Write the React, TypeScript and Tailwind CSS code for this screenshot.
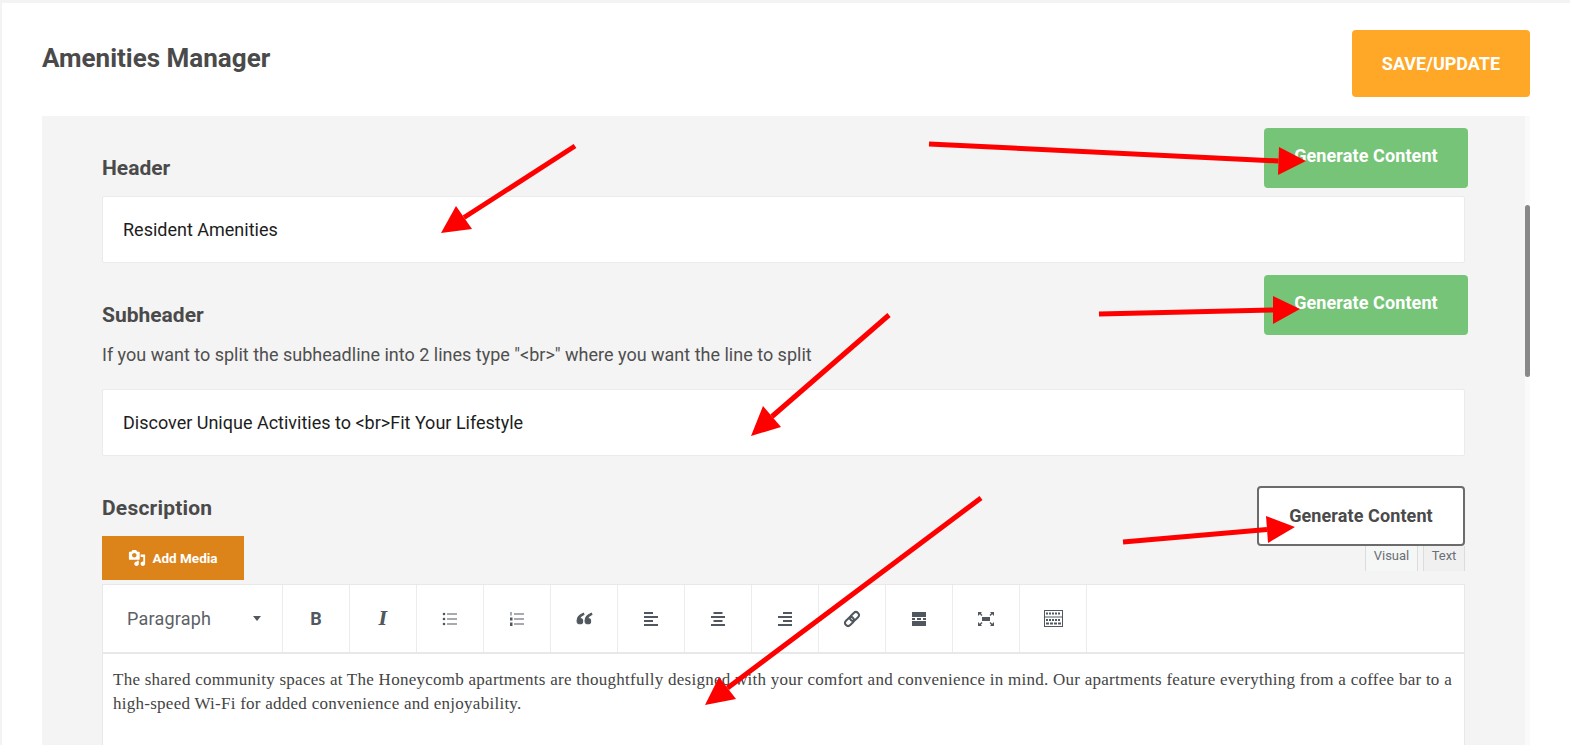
import React from 'react'

const din = "font-['Roboto',sans-serif]"

// hand annotations sitting over the screenshot: line start, tip, two head corners
const arrows = [
  { from: [575, 146], to: [441, 233], a: [456, 206], b: [472, 229] },
  { from: [929, 144], to: [1306, 161], a: [1279, 147], b: [1278, 175] },
  { from: [1099, 314], to: [1300, 309], a: [1273, 296], b: [1273, 324] },
  { from: [889, 315], to: [751, 436], a: [763, 406], b: [781, 427] },
  { from: [981, 498], to: [705, 705], a: [719, 677], b: [736, 699] },
  { from: [1123, 542], to: [1295, 527], a: [1266, 516], b: [1268, 543] },
]

const GenerateButton: React.FC = () => (
  <button className={`w-[204px] h-[60px] rounded bg-[#76c477] text-white text-[18px] tracking-[0.1px] font-bold pb-[6px] ${din}`}>
    Generate Content
  </button>
)

const Bars: React.FC<{ rows: [number, number][] }> = ({ rows }) => (
  <svg width="16" height="16" viewBox="0 0 16 16" fill="#50575e">
    {rows.map(([x, w], i) => (
      <rect key={i} x={x} y={1 + i * 4} width={w} height="2" />
    ))}
  </svg>
)

const tools: React.ReactNode[] = [
  <span key="b" className={`text-[18px] font-bold text-[#50575e] ${din}`}>B</span>,
  <span key="i" className="text-[18px] font-bold italic text-[#50575e] font-['DejaVu_Serif',serif]">I</span>,
  <svg key="ul" width="16" height="16" viewBox="0 0 16 16" fill="#50575e">
    <circle cx="2" cy="3" r="1.3" /><circle cx="2" cy="8" r="1.3" /><circle cx="2" cy="13" r="1.3" />
    <rect x="5" y="2.5" width="10" height="1" /><rect x="5" y="7.5" width="10" height="1" /><rect x="5" y="12.5" width="10" height="1" />
  </svg>,
  <svg key="ol" width="16" height="16" viewBox="0 0 16 16" fill="#50575e">
    <rect x="1.5" y="1" width="1" height="3.5" /><rect x="1" y="6.5" width="2.5" height="3" /><rect x="1" y="11.5" width="2.5" height="3.5" />
    <rect x="5" y="2.5" width="10" height="1" /><rect x="5" y="7.5" width="10" height="1" /><rect x="5" y="12.5" width="10" height="1" />
  </svg>,
  <svg key="q" width="17" height="17" viewBox="0 0 16 16" fill="#50575e" stroke="#50575e" strokeWidth="1">
    <path d="M7 3C4 4.200 1 6.500 1 10c0 1.800 1.100 3 2.700 3C5.200 13 6.300 12 6.300 10.500 6.300 9.100 5.300 8.100 4 8.100c-.3 0-.5 0-.7.100C3.700 6.600 5.300 5.200 7.500 4.200L7 3z" />
    <path d="M14.500 3c-3 1.200-6 3.500-6 7 0 1.800 1.100 3 2.700 3 1.500 0 2.600-1 2.600-2.500 0-1.400-1-2.400-2.300-2.400-.3 0-.5 0-.7.100.4-1.600 2-3 4.200-4L14.500 3z" />
  </svg>,
  <Bars key="al" rows={[[1, 9], [1, 14], [1, 9], [1, 14]]} />,
  <Bars key="ac" rows={[[3.5, 9], [1, 14], [3.5, 9], [1, 14]]} />,
  <Bars key="ar" rows={[[6, 9], [1, 14], [6, 9], [1, 14]]} />,
  <svg key="link" width="18" height="18" viewBox="0 0 18 18" fill="none" stroke="#50575e" strokeWidth="2">
    <g transform="rotate(-45 9 9)">
      <rect x="0.5" y="6" width="10" height="6" rx="3" />
      <rect x="7.5" y="6" width="10" height="6" rx="3" />
    </g>
  </svg>,
  <svg key="more" width="16" height="16" viewBox="0 0 16 16" fill="#50575e">
    <rect x="1" y="1" width="14" height="5" /><rect x="1" y="10" width="14" height="5" />
    <rect x="1" y="7" width="3" height="2" /><rect x="6" y="7" width="4" height="2" /><rect x="12" y="7" width="3" height="2" />
  </svg>,
  <svg key="full" width="18" height="16" viewBox="0 0 18 16" fill="#50575e">
    <rect x="5" y="6" width="8" height="4" />
    <path d="M1 1h4L3.800 2.300 5.500 4 4.500 5 2.800 3.300 1 5zM17 1h-4l1.200 1.300L12.500 4l1 1 1.700-1.700L17 5zM1 15h4l-1.200-1.300L5.500 12l-1-1-1.700 1.700L1 11zM17 15h-4l1.200-1.300L12.500 12l1-1 1.700 1.700L17 11z" />
  </svg>,
  <svg key="kbd" width="19" height="17" viewBox="0 0 19 17" fill="none" stroke="#50575e">
    <rect x="0.5" y="0.5" width="18" height="16" />
    <path d="M2 3.500h15" strokeWidth="2" strokeDasharray="2 1" />
    <path d="M0.500 7h18" />
    <path d="M2 10h15" strokeWidth="2" strokeDasharray="2 1" />
    <path d="M2 13.500h15" strokeWidth="2" strokeDasharray="3 1" />
  </svg>,
]

const App: React.FC = () => {
  return (
    <div className={`relative h-[745px] overflow-hidden bg-[#f3f3f3] pt-[3px] pl-[2px] ${din}`}>
      <div className="bg-white h-full">
        <div className="flex justify-between pl-[40px] pr-[40px] h-[113px]">
          <h1 className="text-[26px] font-bold text-[#4a4a4a] mt-[36px] leading-[38px]">Amenities Manager</h1>
          <button className="mt-[27px] w-[178px] h-[67px] rounded bg-[#ffa726] text-white text-[18px] font-bold">SAVE/UPDATE</button>
        </div>

        <div className="flex">
          <div className="ml-[40px] w-[1483px] h-[640px] bg-[#f4f4f4] pl-[60px] pr-[57px] pt-[12px]">
            <div className="flex justify-between items-start h-[68px]">
              <label className="mt-[28px] text-[21px] leading-[24px] font-bold text-[#4a4a4a]">Header</label>
              <GenerateButton />
            </div>
            <div className="w-[1363px] h-[67px] bg-white border border-[#ebebeb] rounded-[2px] pl-[20px] flex items-center text-[18px] text-[#1d1d1d]">
              Resident Amenities
            </div>

            <div className="flex justify-between items-start mt-[12px] h-[60px]">
              <label className="mt-[28px] text-[21px] leading-[24px] font-bold text-[#4a4a4a]">Subheader</label>
              <GenerateButton />
            </div>
            <p className="text-[18px] leading-[20px] text-[#4f4f4f] mt-[10px]">
              If you want to split the subheadline into 2 lines type "&lt;br&gt;" where you want the line to split
            </p>
            <div className="w-[1363px] h-[67px] mt-[24px] bg-white border border-[#ebebeb] rounded-[2px] pl-[20px] flex items-center text-[18px] text-[#1d1d1d]">
              {'Discover Unique Activities to <br>Fit Your Lifestyle'}
            </div>

            <div className="relative w-[1363px] h-[128px]">
              <label className="absolute left-0 top-[40px] text-[21px] leading-[24px] tracking-[0.2px] font-bold text-[#4a4a4a]">Description</label>
              <button className="absolute left-0 bottom-[4px] w-[142px] h-[44px] bg-[#dc841a] text-white text-[13.5px] font-bold flex items-center justify-center gap-[6px]">
                <svg width="18" height="18" viewBox="0 0 20 20" fill="#fff">
                  <path d="M13 11V4c0-.55-.45-1-1-1h-1.670L9 1H5L3.670 3H2c-.55 0-1 .45-1 1v7c0 .55.45 1 1 1h10c.55 0 1-.45 1-1zM7 4.500c1.380 0 2.500 1.120 2.500 2.500S8.380 9.500 7 9.500 4.500 8.380 4.500 7 5.620 4.500 7 4.500zM14 6h5v10.500c0 1.380-1.120 2.500-2.500 2.500S14 17.880 14 16.500s1.120-2.500 2.500-2.500c.17 0 .34.020.5.050V9h-3V6zm-4 8.050V13h2v3.500c0 1.380-1.120 2.500-2.500 2.500S7 17.880 7 16.500 8.120 14 9.500 14c.17 0 .34.020.5.050z" />
                </svg>
                Add Media
              </button>
              <button className="absolute right-0 top-[30px] w-[208px] h-[60px] bg-white border-2 border-[#6b6b6b] rounded text-[18px] tracking-[0.1px] font-bold text-[#4a4a4a] pb-[2px]">
                Generate Content
              </button>
              <div className="absolute right-0 top-[90px] h-[25px] flex gap-[5px] text-[13px] text-[#6a6f75]">
                <span className="w-[53px] bg-[#f5f6f6] border-l border-r border-[#dcdcdc] flex justify-center items-center pb-[5px]">Visual</span>
                <span className="w-[42px] bg-[#f0f0f0] border-l border-r border-[#dcdcdc] flex justify-center items-center pb-[5px]">Text</span>
              </div>
            </div>

            <div className="w-[1363px] border-x border-[#e8e8e8] bg-white">
              <div className="flex h-[70px] border-t border-b-2 border-[#e8e8e8]">
                <div className="w-[180px] border-r border-[#ececec] pl-[24px] pr-[21px] flex items-center justify-between text-[18px] tracking-[0.2px] text-[#5c6166]">
                  Paragraph
                  <span className="w-0 h-0 border-x-[4px] border-x-transparent border-t-[5px] border-t-[#50575e]" />
                </div>
                {tools.map((tool, i) => (
                  <div key={i} className="w-[67px] border-r border-[#ececec] flex items-center justify-center">
                    {tool}
                  </div>
                ))}
              </div>
              <div className="h-[120px] px-[10px] pt-[14px] text-[17px] tracking-[0.26px] leading-[24px] text-[#444444] font-['Liberation_Serif',serif]">
                The shared community spaces at The Honeycomb apartments are thoughtfully designed with your comfort and convenience in mind. Our apartments feature everything from a coffee bar to a high-speed Wi-Fi for added convenience and enjoyability.
              </div>
            </div>
          </div>

          <div className="relative w-[5px] bg-[#fafafa]">
            <div className="absolute left-0 top-[89px] w-[5px] h-[172px] rounded-full bg-[#888888]" />
          </div>
        </div>
      </div>

      <svg className="absolute inset-0 pointer-events-none" width="1570" height="745">
        {arrows.map((arrow, i) => (
          <g key={i}>
            <line x1={arrow.from[0]} y1={arrow.from[1]} x2={(arrow.a[0] + arrow.b[0]) / 2} y2={(arrow.a[1] + arrow.b[1]) / 2} stroke="#ff0000" strokeWidth="5" />
            <polygon points={`${arrow.to.join(',')} ${arrow.a.join(',')} ${arrow.b.join(',')}`} fill="#ff0000" />
          </g>
        ))}
      </svg>
    </div>
  )
}

export default App
